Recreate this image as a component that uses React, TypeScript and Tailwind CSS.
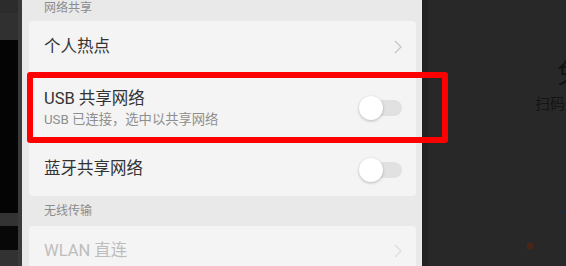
import React from "react";

const font = "font-['Roboto','Noto_Sans_CJK_SC',sans-serif]";

function Toggle() {
  return (
    <div className="relative w-[43px] h-[24px] shrink-0">
      <div className="absolute right-0 top-[4px] w-[40px] h-[16px] rounded-full bg-[#e1e1e1]" />
      <div className="absolute left-0 top-0 w-[24px] h-[24px] rounded-full bg-white shadow-[0_1px_3px_rgba(0,0,0,0.25)]" />
    </div>
  );
}

function Chevron({ color = "#c4c4c4" }: { color?: string }) {
  return (
    <svg width="8" height="14" viewBox="0 0 8 14" className="shrink-0">
      <polyline points="1,1 7,7 1,13" fill="none" stroke={color} strokeWidth="1.2" />
    </svg>
  );
}

export default function App() {
  return (
    <div className={`w-[566px] h-[266px] overflow-hidden flex ${font} relative`}>
      {/* left strip */}
      <div className="w-[22px] h-full flex shrink-0">
        <div className="w-[18px] h-full flex flex-col">
          <div className="h-[13px] shrink-0 bg-[#2c2c2c]" />
          <div className="h-[27px] shrink-0 bg-[#303030]" />
          <div className="h-[173px] shrink-0 bg-[#040404]" />
          <div className="h-[13px] shrink-0 bg-[#333333]" />
          <div className="h-[24px] shrink-0 bg-[#080808]" />
          <div className="flex-1 bg-[#323232]" />
        </div>
        <div className="w-[4px] h-full bg-[#3a3a3a]" />
      </div>

      {/* settings panel */}
      <div className="w-[400px] h-full bg-[#e9e9e9] pl-[7px] pr-[6px] flex flex-col shrink-0 overflow-hidden">
        <div className="h-[21px] shrink-0 pl-[15px] text-[12px] leading-[17px] text-[#8c8c8c]">网络共享</div>
        <div className="shrink-0 bg-[#f4f4f4] rounded-[4px] flex flex-col">
          <div className="h-[52px] shrink-0 pl-[15px] pr-[14px] flex items-center justify-between">
            <span className="text-[16.5px] text-[#333333]">个人热点</span>
            <Chevron />
          </div>
          <div className="h-[70px] shrink-0 pl-[15px] pr-[14px] flex items-center justify-between">
            <div className="flex flex-col pt-[1px]">
              <span className="text-[16.5px] leading-[22px] text-[#333333]">USB 共享网络</span>
              <span className="text-[13.3px] leading-[19px] text-[#8e8e8e]">USB 已连接，选中以共享网络</span>
            </div>
            <Toggle />
          </div>
          <div className="h-[53px] shrink-0 pl-[15px] pr-[14px] flex items-center justify-between">
            <span className="text-[16.5px] text-[#333333]">蓝牙共享网络</span>
            <Toggle />
          </div>
        </div>
        <div className="h-[30px] shrink-0 pl-[15px] flex items-center text-[12px] text-[#8c8c8c]">无线传输</div>
        <div className="shrink-0 bg-[#f4f4f4] rounded-[4px] flex flex-col">
          <div className="h-[50px] shrink-0 pl-[15px] pr-[14px] flex items-center justify-between">
            <span className="text-[16.5px] text-[#bdbdbd]">WLAN 直连</span>
            <Chevron color="#dcdcdc" />
          </div>
        </div>
      </div>

      {/* right dark area */}
      <div className="flex-1 h-full bg-[#282828] flex overflow-hidden">
        <div className="w-[6px] h-full bg-[#222222] shrink-0" />
        <div className="flex flex-col shrink-0 pl-[107px] pt-[58px]">
          <span className="ml-[22px] text-[28px] leading-[32px] text-[#121212] whitespace-nowrap">免流</span>
          <span className="mt-[4px] text-[15px] leading-[20px] text-[#141414] whitespace-nowrap">扫码连接</span>
          <div className="mt-[96px] ml-[25px] w-[3px] h-[3px] rounded-full bg-[#1c2c4c]" />
          <div className="mt-[30px] ml-[-8px] w-[6px] h-[6px] bg-[#4a2418]" />
        </div>
      </div>

      {/* red highlight */}
      <div className="absolute left-[27px] top-[72px] w-[421px] h-[71px] border-[6px] border-[#ff0000] rounded-[3px] pointer-events-none" />
    </div>
  );
}
